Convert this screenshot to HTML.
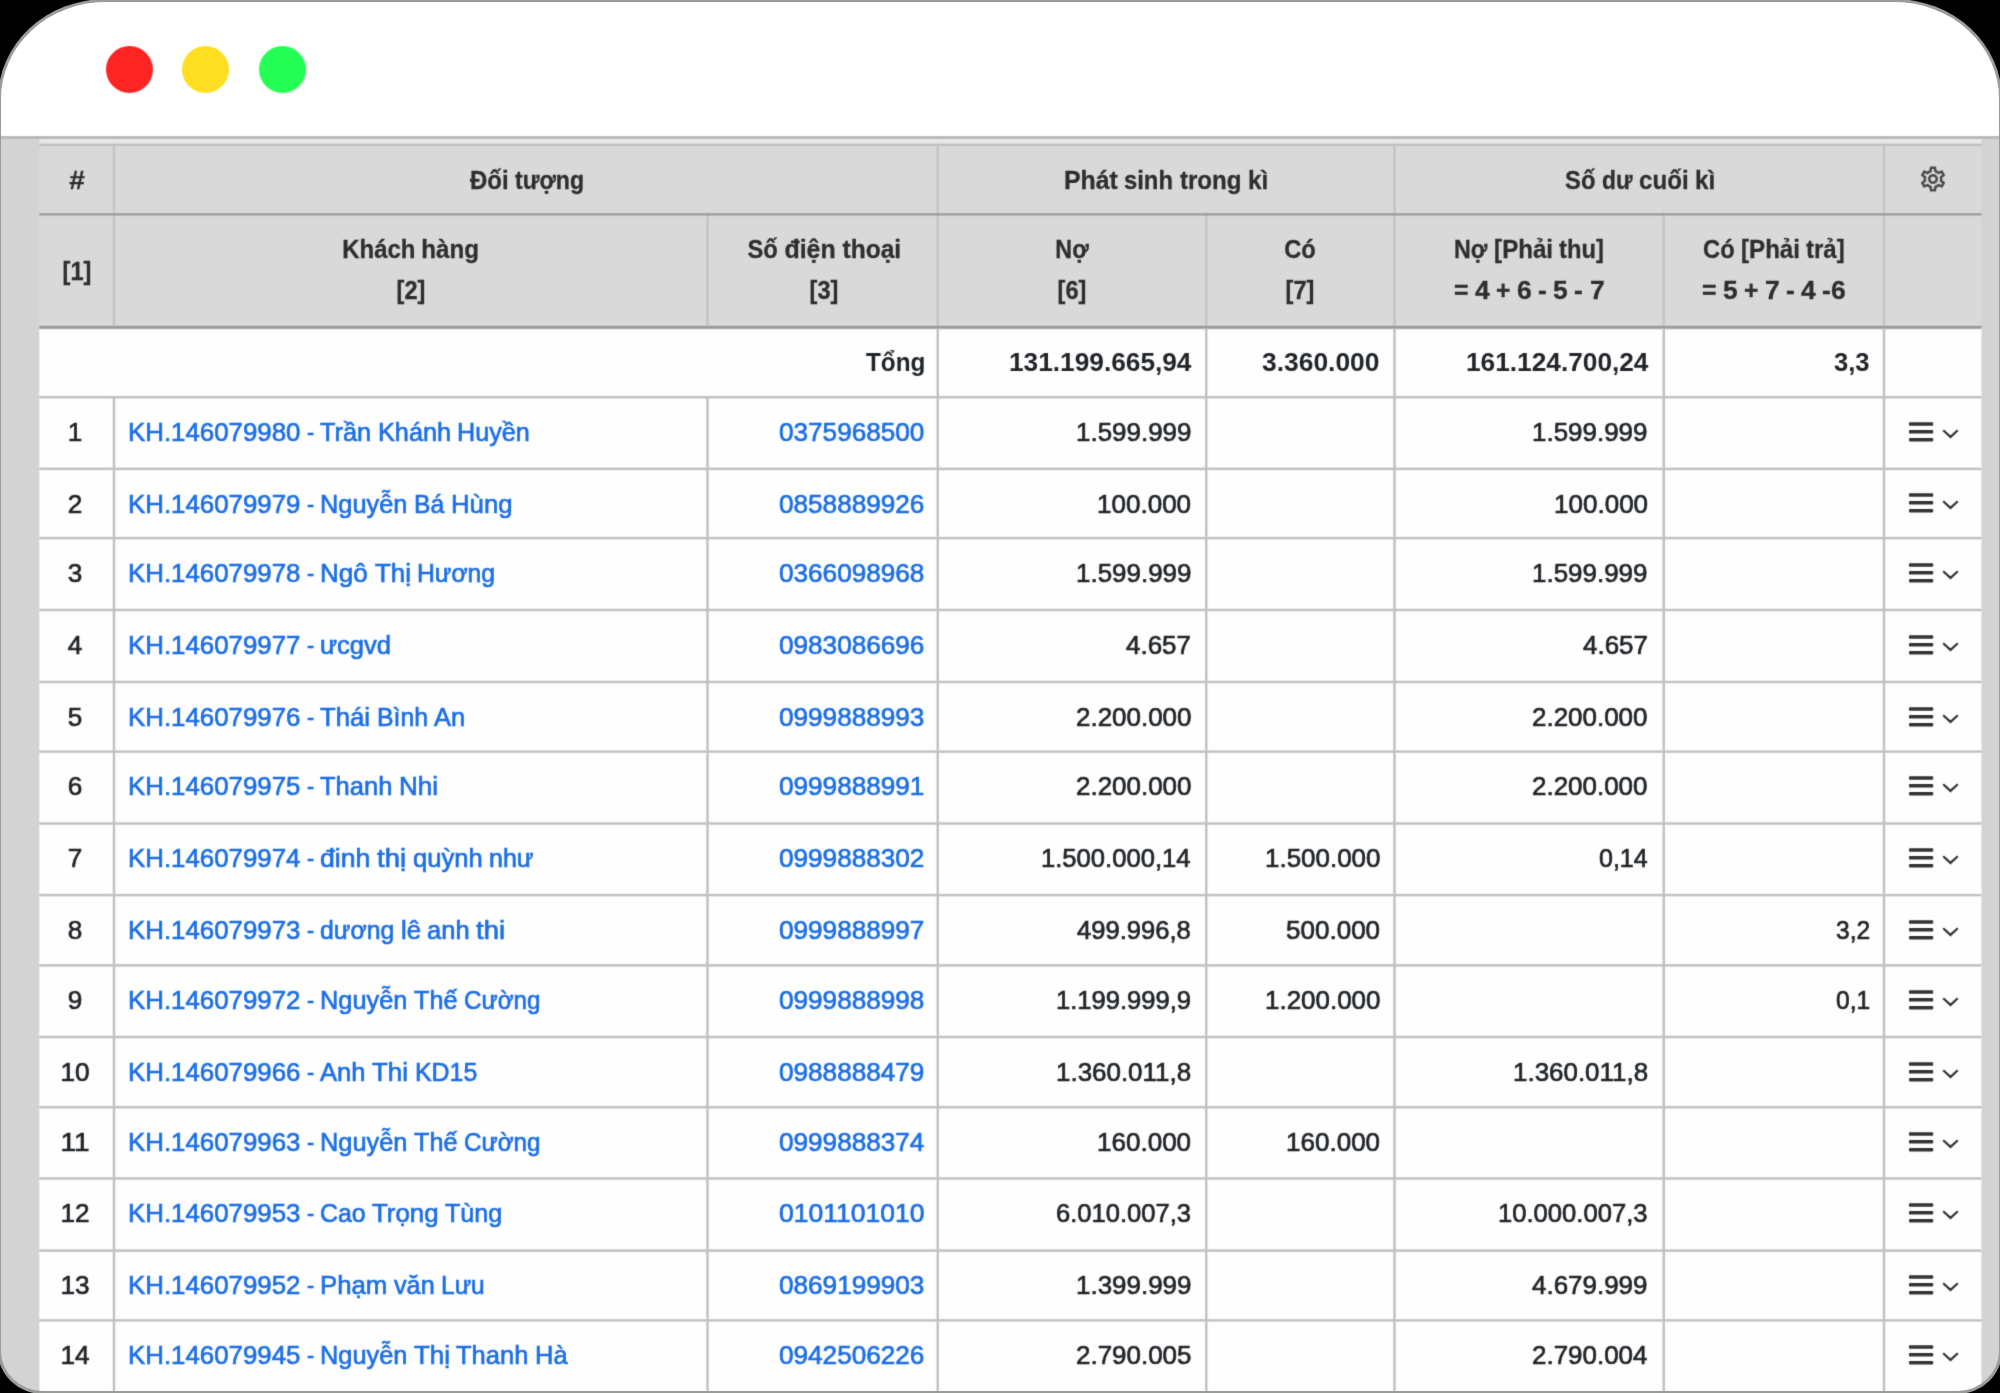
<!DOCTYPE html>
<html><head><meta charset="utf-8"><title>Công nợ khách hàng</title>
<style>
html,body{margin:0;padding:0;background:#000;}
html{overflow:hidden;width:2000px;height:1393px;}
body{width:2000px;height:1393px;overflow:hidden;position:relative;font-family:"Liberation Sans", sans-serif;}
#clip{position:absolute;left:0;top:0;width:2000px;height:1393px;overflow:hidden;}
#win{position:absolute;left:-2px;top:-1px;width:2004px;height:1395px;box-sizing:border-box;border:3px solid #9a9c9a;border-radius:108px 108px 45px 45px / 100px 100px 43px 43px;background:#d3d3d3;overflow:hidden;}
#inner{position:absolute;left:-1px;top:-2px;width:2000px;height:1393px;filter:url(#soft);}
#bar{position:absolute;left:0;top:0;width:2000px;height:136px;background:#fff;}
#barline{position:absolute;left:0;top:136px;width:2000px;height:3px;background:#b9bbb8;}
.dot{position:absolute;top:46px;width:47px;height:47px;border-radius:50%;}
i{position:absolute;display:block;}
.t{position:absolute;white-space:nowrap;font-size:25.3px;line-height:0;height:0;display:block;}
.t::before{content:"";display:inline-block;height:0;}
.h{font-weight:bold;color:#2e2e2e;-webkit-text-stroke:0.3px #2e2e2e;}
.b{font-weight:bold;color:#212529;}
.d{color:#212529;-webkit-text-stroke:0.65px #212529;}
.a{color:#1c6fe6;-webkit-text-stroke:0.65px #1c6fe6;}
.ic{position:absolute;display:block;}
u{display:inline-block;text-decoration:none;white-space:nowrap;}
s{display:inline-block;text-decoration:none;transform-origin:0 50%;white-space:nowrap;}
</style></head><body>
<svg width="0" height="0" style="position:absolute"><defs><filter id="soft" x="0" y="0" width="100%" height="100%" color-interpolation-filters="sRGB"><feConvolveMatrix order="3" kernelMatrix="0 1 0 1 4 1 0 1 0" divisor="8" edgeMode="duplicate" preserveAlpha="false"/></filter></defs></svg>
<div id="clip"><div id="win"><div id="inner">
<div id="bar"></div><div id="barline"></div>
<div class="dot" style="left:106px;background:#ff2424"></div>
<div class="dot" style="left:182px;background:#ffde21"></div>
<div class="dot" style="left:259px;background:#24ff55"></div>
<svg id="lines" width="2000" height="1393" viewBox="0 0 2000 1393"><defs><linearGradient id="g2" x1="0" y1="0" x2="0" y2="1"><stop offset="0" stop-color="#c8c8c8"/><stop offset="0.16" stop-color="#9a9a9a"/><stop offset="0.52" stop-color="#9a9a9a"/><stop offset="0.76" stop-color="#e4e4e4"/><stop offset="1" stop-color="#fefefe"/></linearGradient></defs>
<rect x="39.3" y="139" width="1942.2" height="4.8" fill="#e7e7e7"/>
<rect x="39.3" y="143.8" width="1942.2" height="181.2" fill="#d9d9d9"/>
<rect x="39.3" y="328" width="1942.2" height="1065" fill="#fefefe"/>
<rect x="39.3" y="325.5" width="1942.2" height="5" fill="url(#g2)"/>
<rect x="112.75" y="143.8" width="2.5" height="181.7" fill="#c4c4c4"/>
<rect x="706.25" y="212.5" width="2.5" height="113.0" fill="#c4c4c4"/>
<rect x="936.5" y="143.8" width="2.5" height="181.7" fill="#c4c4c4"/>
<rect x="1205.0" y="212.5" width="2.5" height="113.0" fill="#c4c4c4"/>
<rect x="1393.25" y="143.8" width="2.5" height="181.7" fill="#c4c4c4"/>
<rect x="1662.5" y="212.5" width="2.5" height="113.0" fill="#c4c4c4"/>
<rect x="1882.75" y="143.8" width="2.5" height="181.7" fill="#c4c4c4"/>
<rect x="112.75" y="397.3" width="2.5" height="995.7" fill="#c2c2c2"/>
<rect x="706.25" y="397.3" width="2.5" height="995.7" fill="#c2c2c2"/>
<rect x="936.5" y="328.4" width="2.5" height="1064.6" fill="#c2c2c2"/>
<rect x="1205.0" y="328.4" width="2.5" height="1064.6" fill="#c2c2c2"/>
<rect x="1393.25" y="328.4" width="2.5" height="1064.6" fill="#c2c2c2"/>
<rect x="1662.5" y="328.4" width="2.5" height="1064.6" fill="#c2c2c2"/>
<rect x="1882.75" y="328.4" width="2.5" height="1064.6" fill="#c2c2c2"/>
<rect x="39.3" y="395.95" width="1942.2" height="2.5" fill="#c2c2c2"/>
<rect x="39.3" y="467.65" width="1942.2" height="2.5" fill="#c2c2c2"/>
<rect x="39.3" y="536.85" width="1942.2" height="2.5" fill="#c2c2c2"/>
<rect x="39.3" y="608.75" width="1942.2" height="2.5" fill="#c2c2c2"/>
<rect x="39.3" y="680.75" width="1942.2" height="2.5" fill="#c2c2c2"/>
<rect x="39.3" y="750.35" width="1942.2" height="2.5" fill="#c2c2c2"/>
<rect x="39.3" y="822.25" width="1942.2" height="2.5" fill="#c2c2c2"/>
<rect x="39.3" y="893.85" width="1942.2" height="2.5" fill="#c2c2c2"/>
<rect x="39.3" y="964.15" width="1942.2" height="2.5" fill="#c2c2c2"/>
<rect x="39.3" y="1035.75" width="1942.2" height="2.5" fill="#c2c2c2"/>
<rect x="39.3" y="1105.95" width="1942.2" height="2.5" fill="#c2c2c2"/>
<rect x="39.3" y="1177.25" width="1942.2" height="2.5" fill="#c2c2c2"/>
<rect x="39.3" y="1249.35" width="1942.2" height="2.5" fill="#c2c2c2"/>
<rect x="39.3" y="1319.15" width="1942.2" height="2.5" fill="#c2c2c2"/>
<rect x="39.3" y="143.8" width="1942.2" height="2.2" fill="#c0c0c0"/>
<rect x="39.3" y="213.2" width="1942.2" height="2.3" fill="#9c9c9c"/>
</svg>
<div id="txt">
<span class="t h" style="left:76.65px;top:179.53px;transform:translateX(-50%);"><u style="width:15.61px"><s style="transform:scaleX(1.1087)">#</s></u></span>
<span class="t h" style="left:527.475px;top:179.53px;transform:translateX(-50%);"><u style="width:38.56px;margin-right:6.41px"><s style="transform:scaleX(0.9463)">Đối</s></u><u style="width:69.00px"><s style="transform:scaleX(0.9122)">tượng</s></u></span>
<span class="t h" style="left:1166.125px;top:179.53px;transform:translateX(-50%);"><u style="width:53.90px;margin-right:6.41px"><s style="transform:scaleX(0.9830)">Phát</s></u><u style="width:49.09px;margin-right:6.41px"><s style="transform:scaleX(0.9437)">sinh</s></u><u style="width:61.69px;margin-right:6.41px"><s style="transform:scaleX(0.9544)">trong</s></u><u style="width:20.27px"><s style="transform:scaleX(0.9602)">kì</s></u></span>
<span class="t h" style="left:1639.95px;top:179.53px;transform:translateX(-50%);"><u style="width:30.36px;margin-right:6.41px"><s style="transform:scaleX(0.9391)">Số</s></u><u style="width:30.44px;margin-right:6.41px"><s style="transform:scaleX(0.9011)">dư</s></u><u style="width:49.58px;margin-right:6.41px"><s style="transform:scaleX(0.9531)">cuối</s></u><u style="width:20.27px"><s style="transform:scaleX(0.9602)">kì</s></u></span>
<span class="t h" style="left:76.65px;top:270.73px;transform:translateX(-50%);"><u style="width:28.77px"><s style="transform:scaleX(0.9305)">[1]</s></u></span>
<span class="t h" style="left:410.75px;top:249.23px;transform:translateX(-50%);"><u style="width:73.14px;margin-right:6.41px"><s style="transform:scaleX(0.9461)">Khách</s></u><u style="width:57.87px"><s style="transform:scaleX(0.9575)">hàng</s></u></span>
<span class="t h" style="left:410.75px;top:289.83px;transform:translateX(-50%);"><u style="width:28.77px"><s style="transform:scaleX(0.9305)">[2]</s></u></span>
<span class="t h" style="left:824.225px;top:249.23px;transform:translateX(-50%);"><u style="width:30.36px;margin-right:6.41px"><s style="transform:scaleX(0.9391)">Số</s></u><u style="width:51.19px;margin-right:6.41px"><s style="transform:scaleX(0.9840)">điện</s></u><u style="width:58.68px"><s style="transform:scaleX(0.9709)">thoại</s></u></span>
<span class="t h" style="left:823.925px;top:289.83px;transform:translateX(-50%);"><u style="width:28.77px"><s style="transform:scaleX(0.9305)">[3]</s></u></span>
<span class="t h" style="left:1072.0px;top:249.23px;transform:translateX(-50%);"><u style="width:33.28px"><s style="transform:scaleX(0.9176)">Nợ</s></u></span>
<span class="t h" style="left:1072.0px;top:289.83px;transform:translateX(-50%);"><u style="width:28.77px"><s style="transform:scaleX(0.9305)">[6]</s></u></span>
<span class="t h" style="left:1300.375px;top:249.23px;transform:translateX(-50%);"><u style="width:31.58px"><s style="transform:scaleX(0.9363)">Có</s></u></span>
<span class="t h" style="left:1300.375px;top:289.83px;transform:translateX(-50%);"><u style="width:28.77px"><s style="transform:scaleX(0.9305)">[7]</s></u></span>
<span class="t h" style="left:1529.125px;top:249.23px;transform:translateX(-50%);"><u style="width:33.28px;margin-right:6.41px"><s style="transform:scaleX(0.9176)">Nợ</s></u><u style="width:58.94px;margin-right:6.41px"><s style="transform:scaleX(0.9528)">[Phải</s></u><u style="width:44.78px"><s style="transform:scaleX(0.9374)">thu]</s></u></span>
<span class="t h" style="left:1529.125px;top:289.83px;transform:translateX(-50%);"><u style="width:14.56px;margin-right:6.41px"><s style="transform:scaleX(0.9851)">=</s></u><u style="width:14.72px;margin-right:6.41px"><s style="transform:scaleX(1.0455)">4</s></u><u style="width:14.38px;margin-right:6.41px"><s style="transform:scaleX(0.9729)">+</s></u><u style="width:14.72px;margin-right:6.41px"><s style="transform:scaleX(1.0455)">6</s></u><u style="width:8.80px;margin-right:6.41px"><s style="transform:scaleX(1.0427)">-</s></u><u style="width:14.72px;margin-right:6.41px"><s style="transform:scaleX(1.0455)">5</s></u><u style="width:8.80px;margin-right:6.41px"><s style="transform:scaleX(1.0427)">-</s></u><u style="width:14.72px"><s style="transform:scaleX(1.0455)">7</s></u></span>
<span class="t h" style="left:1773.875px;top:249.23px;transform:translateX(-50%);"><u style="width:31.58px;margin-right:6.41px"><s style="transform:scaleX(0.9363)">Có</s></u><u style="width:58.94px;margin-right:6.41px"><s style="transform:scaleX(0.9528)">[Phải</s></u><u style="width:38.59px"><s style="transform:scaleX(0.9465)">trả]</s></u></span>
<span class="t h" style="left:1773.875px;top:289.83px;transform:translateX(-50%);"><u style="width:14.56px;margin-right:6.41px"><s style="transform:scaleX(0.9851)">=</s></u><u style="width:14.72px;margin-right:6.41px"><s style="transform:scaleX(1.0455)">5</s></u><u style="width:14.38px;margin-right:6.41px"><s style="transform:scaleX(0.9729)">+</s></u><u style="width:14.72px;margin-right:6.41px"><s style="transform:scaleX(1.0455)">7</s></u><u style="width:8.80px;margin-right:6.41px"><s style="transform:scaleX(1.0427)">-</s></u><u style="width:14.72px;margin-right:6.41px"><s style="transform:scaleX(1.0455)">4</s></u><u style="width:23.50px"><s style="transform:scaleX(1.0444)">-6</s></u></span>
<span class="t b" style="right:1074.5px;top:362.23px;"><u style="width:59.48px"><s style="transform:scaleX(0.9623)">Tổng</s></u></span>
<span class="t b" style="right:808.5999999999999px;top:362.23px;"><u style="width:182.47px"><s style="transform:scaleX(1.0377)">131.199.665,94</s></u></span>
<span class="t b" style="right:620.8px;top:362.23px;"><u style="width:117.51px"><s style="transform:scaleX(1.0441)">3.360.000</s></u></span>
<span class="t b" style="right:351.79999999999995px;top:362.23px;"><u style="width:182.47px"><s style="transform:scaleX(1.0377)">161.124.700,24</s></u></span>
<span class="t b" style="right:130.4000000000001px;top:362.23px;"><u style="width:35.63px"><s style="transform:scaleX(1.0131)">3,3</s></u></span>
<span class="t d" style="left:75.15px;top:432.03px;transform:translateX(-50%);"><u style="width:14.55px"><s style="transform:scaleX(1.0334)">1</s></u></span>
<span class="t a" style="left:128px;top:432.03px;"><u style="width:172.41px;margin-right:6.41px"><s style="transform:scaleX(1.0214)">KH.146079980</s></u><u style="width:7.16px;margin-right:6.41px"><s style="transform:scaleX(0.8483)">-</s></u><u style="width:51.12px;margin-right:6.41px"><s style="transform:scaleX(1.0008)">Trần</s></u><u style="width:73.11px;margin-right:6.41px"><s style="transform:scaleX(0.9993)">Khánh</s></u><u style="width:72.81px"><s style="transform:scaleX(0.9958)">Huyền</s></u></span>
<span class="t a" style="right:1075.6px;top:432.03px;"><u style="width:145.42px"><s style="transform:scaleX(1.0335)">0375968500</s></u></span>
<span class="t d" style="right:809px;top:432.03px;"><u style="width:115.45px"><s style="transform:scaleX(1.0258)">1.599.999</s></u></span>
<span class="t d" style="right:352.20000000000005px;top:432.03px;"><u style="width:115.45px"><s style="transform:scaleX(1.0258)">1.599.999</s></u></span>
<svg class="ic" style="left:1906px;top:417.7px" width="60" height="28" viewBox="0 0 60 28"><g fill="#333"><rect x="3" y="4.3" width="24.2" height="3.5" rx="0.8"/><rect x="3" y="12.1" width="24.2" height="3.5" rx="0.8"/><rect x="3" y="19.9" width="24.2" height="3.5" rx="0.8"/></g><path d="M37.2 12.3 L44.5 18.9 L51.8 12.3" fill="none" stroke="#333" stroke-width="2.2"/></svg>
<span class="t d" style="left:75.15px;top:503.73px;transform:translateX(-50%);"><u style="width:14.55px"><s style="transform:scaleX(1.0334)">2</s></u></span>
<span class="t a" style="left:128px;top:503.73px;"><u style="width:172.41px;margin-right:6.41px"><s style="transform:scaleX(1.0214)">KH.146079979</s></u><u style="width:7.16px;margin-right:6.41px"><s style="transform:scaleX(0.8483)">-</s></u><u style="width:87.34px;margin-right:6.41px"><s style="transform:scaleX(1.0016)">Nguyễn</s></u><u style="width:30.20px;margin-right:6.41px"><s style="transform:scaleX(0.9758)">Bá</s></u><u style="width:61.55px"><s style="transform:scaleX(1.0177)">Hùng</s></u></span>
<span class="t a" style="right:1075.6px;top:503.73px;"><u style="width:145.42px"><s style="transform:scaleX(1.0335)">0858889926</s></u></span>
<span class="t d" style="right:809px;top:503.73px;"><u style="width:94.08px"><s style="transform:scaleX(1.0288)">100.000</s></u></span>
<span class="t d" style="right:352.20000000000005px;top:503.73px;"><u style="width:94.08px"><s style="transform:scaleX(1.0288)">100.000</s></u></span>
<svg class="ic" style="left:1906px;top:489.4px" width="60" height="28" viewBox="0 0 60 28"><g fill="#333"><rect x="3" y="4.3" width="24.2" height="3.5" rx="0.8"/><rect x="3" y="12.1" width="24.2" height="3.5" rx="0.8"/><rect x="3" y="19.9" width="24.2" height="3.5" rx="0.8"/></g><path d="M37.2 12.3 L44.5 18.9 L51.8 12.3" fill="none" stroke="#333" stroke-width="2.2"/></svg>
<span class="t d" style="left:75.15px;top:572.93px;transform:translateX(-50%);"><u style="width:14.55px"><s style="transform:scaleX(1.0334)">3</s></u></span>
<span class="t a" style="left:128px;top:572.93px;"><u style="width:172.41px;margin-right:6.41px"><s style="transform:scaleX(1.0214)">KH.146079978</s></u><u style="width:7.16px;margin-right:6.41px"><s style="transform:scaleX(0.8483)">-</s></u><u style="width:47.75px;margin-right:6.41px"><s style="transform:scaleX(1.0287)">Ngô</s></u><u style="width:35.98px;margin-right:6.41px"><s style="transform:scaleX(1.0233)">Thị</s></u><u style="width:78.09px"><s style="transform:scaleX(0.9769)">Hương</s></u></span>
<span class="t a" style="right:1075.6px;top:572.93px;"><u style="width:145.42px"><s style="transform:scaleX(1.0335)">0366098968</s></u></span>
<span class="t d" style="right:809px;top:572.93px;"><u style="width:115.45px"><s style="transform:scaleX(1.0258)">1.599.999</s></u></span>
<span class="t d" style="right:352.20000000000005px;top:572.93px;"><u style="width:115.45px"><s style="transform:scaleX(1.0258)">1.599.999</s></u></span>
<svg class="ic" style="left:1906px;top:558.6px" width="60" height="28" viewBox="0 0 60 28"><g fill="#333"><rect x="3" y="4.3" width="24.2" height="3.5" rx="0.8"/><rect x="3" y="12.1" width="24.2" height="3.5" rx="0.8"/><rect x="3" y="19.9" width="24.2" height="3.5" rx="0.8"/></g><path d="M37.2 12.3 L44.5 18.9 L51.8 12.3" fill="none" stroke="#333" stroke-width="2.2"/></svg>
<span class="t d" style="left:75.15px;top:644.83px;transform:translateX(-50%);"><u style="width:14.55px"><s style="transform:scaleX(1.0334)">4</s></u></span>
<span class="t a" style="left:128px;top:644.83px;"><u style="width:172.41px;margin-right:6.41px"><s style="transform:scaleX(1.0214)">KH.146079977</s></u><u style="width:7.16px;margin-right:6.41px"><s style="transform:scaleX(0.8483)">-</s></u><u style="width:71.05px"><s style="transform:scaleX(1.0095)">ưcgvd</s></u></span>
<span class="t a" style="right:1075.6px;top:644.83px;"><u style="width:145.42px"><s style="transform:scaleX(1.0335)">0983086696</s></u></span>
<span class="t d" style="right:809px;top:644.83px;"><u style="width:65.00px"><s style="transform:scaleX(1.0267)">4.657</s></u></span>
<span class="t d" style="right:352.20000000000005px;top:644.83px;"><u style="width:65.00px"><s style="transform:scaleX(1.0267)">4.657</s></u></span>
<svg class="ic" style="left:1906px;top:630.5px" width="60" height="28" viewBox="0 0 60 28"><g fill="#333"><rect x="3" y="4.3" width="24.2" height="3.5" rx="0.8"/><rect x="3" y="12.1" width="24.2" height="3.5" rx="0.8"/><rect x="3" y="19.9" width="24.2" height="3.5" rx="0.8"/></g><path d="M37.2 12.3 L44.5 18.9 L51.8 12.3" fill="none" stroke="#333" stroke-width="2.2"/></svg>
<span class="t d" style="left:75.15px;top:716.83px;transform:translateX(-50%);"><u style="width:14.55px"><s style="transform:scaleX(1.0334)">5</s></u></span>
<span class="t a" style="left:128px;top:716.83px;"><u style="width:172.41px;margin-right:6.41px"><s style="transform:scaleX(1.0214)">KH.146079976</s></u><u style="width:7.16px;margin-right:6.41px"><s style="transform:scaleX(0.8483)">-</s></u><u style="width:50.06px;margin-right:6.41px"><s style="transform:scaleX(1.0171)">Thái</s></u><u style="width:51.08px;margin-right:6.41px"><s style="transform:scaleX(0.9814)">Bình</s></u><u style="width:31.17px"><s style="transform:scaleX(1.0071)">An</s></u></span>
<span class="t a" style="right:1075.6px;top:716.83px;"><u style="width:145.42px"><s style="transform:scaleX(1.0335)">0999888993</s></u></span>
<span class="t d" style="right:809px;top:716.83px;"><u style="width:115.45px"><s style="transform:scaleX(1.0258)">2.200.000</s></u></span>
<span class="t d" style="right:352.20000000000005px;top:716.83px;"><u style="width:115.45px"><s style="transform:scaleX(1.0258)">2.200.000</s></u></span>
<svg class="ic" style="left:1906px;top:702.5px" width="60" height="28" viewBox="0 0 60 28"><g fill="#333"><rect x="3" y="4.3" width="24.2" height="3.5" rx="0.8"/><rect x="3" y="12.1" width="24.2" height="3.5" rx="0.8"/><rect x="3" y="19.9" width="24.2" height="3.5" rx="0.8"/></g><path d="M37.2 12.3 L44.5 18.9 L51.8 12.3" fill="none" stroke="#333" stroke-width="2.2"/></svg>
<span class="t d" style="left:75.15px;top:786.43px;transform:translateX(-50%);"><u style="width:14.55px"><s style="transform:scaleX(1.0334)">6</s></u></span>
<span class="t a" style="left:128px;top:786.43px;"><u style="width:172.41px;margin-right:6.41px"><s style="transform:scaleX(1.0214)">KH.146079975</s></u><u style="width:7.16px;margin-right:6.41px"><s style="transform:scaleX(0.8483)">-</s></u><u style="width:72.31px;margin-right:6.41px"><s style="transform:scaleX(1.0081)">Thanh</s></u><u style="width:39.02px"><s style="transform:scaleX(1.0277)">Nhi</s></u></span>
<span class="t a" style="right:1075.6px;top:786.43px;"><u style="width:145.42px"><s style="transform:scaleX(1.0335)">0999888991</s></u></span>
<span class="t d" style="right:809px;top:786.43px;"><u style="width:115.45px"><s style="transform:scaleX(1.0258)">2.200.000</s></u></span>
<span class="t d" style="right:352.20000000000005px;top:786.43px;"><u style="width:115.45px"><s style="transform:scaleX(1.0258)">2.200.000</s></u></span>
<svg class="ic" style="left:1906px;top:772.1px" width="60" height="28" viewBox="0 0 60 28"><g fill="#333"><rect x="3" y="4.3" width="24.2" height="3.5" rx="0.8"/><rect x="3" y="12.1" width="24.2" height="3.5" rx="0.8"/><rect x="3" y="19.9" width="24.2" height="3.5" rx="0.8"/></g><path d="M37.2 12.3 L44.5 18.9 L51.8 12.3" fill="none" stroke="#333" stroke-width="2.2"/></svg>
<span class="t d" style="left:75.15px;top:858.33px;transform:translateX(-50%);"><u style="width:14.55px"><s style="transform:scaleX(1.0334)">7</s></u></span>
<span class="t a" style="left:128px;top:858.33px;"><u style="width:172.41px;margin-right:6.41px"><s style="transform:scaleX(1.0214)">KH.146079974</s></u><u style="width:7.16px;margin-right:6.41px"><s style="transform:scaleX(0.8483)">-</s></u><u style="width:50.31px;margin-right:6.41px"><s style="transform:scaleX(1.0519)">đinh</s></u><u style="width:29.02px;margin-right:6.41px"><s style="transform:scaleX(1.0861)">thị</s></u><u style="width:69.77px;margin-right:6.41px"><s style="transform:scaleX(1.0120)">quỳnh</s></u><u style="width:44.56px"><s style="transform:scaleX(0.9885)">như</s></u></span>
<span class="t a" style="right:1075.6px;top:858.33px;"><u style="width:145.42px"><s style="transform:scaleX(1.0335)">0999888302</s></u></span>
<span class="t d" style="right:809px;top:858.33px;"><u style="width:149.62px"><s style="transform:scaleX(1.0129)">1.500.000,14</s></u></span>
<span class="t d" style="right:620px;top:858.33px;"><u style="width:115.45px"><s style="transform:scaleX(1.0258)">1.500.000</s></u></span>
<span class="t d" style="right:352.20000000000005px;top:858.33px;"><u style="width:48.72px"><s style="transform:scaleX(0.9892)">0,14</s></u></span>
<svg class="ic" style="left:1906px;top:844.0px" width="60" height="28" viewBox="0 0 60 28"><g fill="#333"><rect x="3" y="4.3" width="24.2" height="3.5" rx="0.8"/><rect x="3" y="12.1" width="24.2" height="3.5" rx="0.8"/><rect x="3" y="19.9" width="24.2" height="3.5" rx="0.8"/></g><path d="M37.2 12.3 L44.5 18.9 L51.8 12.3" fill="none" stroke="#333" stroke-width="2.2"/></svg>
<span class="t d" style="left:75.15px;top:929.93px;transform:translateX(-50%);"><u style="width:14.55px"><s style="transform:scaleX(1.0334)">8</s></u></span>
<span class="t a" style="left:128px;top:929.93px;"><u style="width:172.41px;margin-right:6.41px"><s style="transform:scaleX(1.0214)">KH.146079973</s></u><u style="width:7.16px;margin-right:6.41px"><s style="transform:scaleX(0.8483)">-</s></u><u style="width:74.22px;margin-right:6.41px"><s style="transform:scaleX(0.9801)">dương</s></u><u style="width:20.02px;margin-right:6.41px"><s style="transform:scaleX(1.0162)">lê</s></u><u style="width:42.62px;margin-right:6.41px"><s style="transform:scaleX(1.0095)">anh</s></u><u style="width:29.02px"><s style="transform:scaleX(1.0861)">thi</s></u></span>
<span class="t a" style="right:1075.6px;top:929.93px;"><u style="width:145.42px"><s style="transform:scaleX(1.0335)">0999888997</s></u></span>
<span class="t d" style="right:809px;top:929.93px;"><u style="width:113.72px"><s style="transform:scaleX(1.0104)">499.996,8</s></u></span>
<span class="t d" style="right:620px;top:929.93px;"><u style="width:94.08px"><s style="transform:scaleX(1.0288)">500.000</s></u></span>
<span class="t d" style="right:130px;top:929.93px;"><u style="width:34.19px"><s style="transform:scaleX(0.9721)">3,2</s></u></span>
<svg class="ic" style="left:1906px;top:915.6px" width="60" height="28" viewBox="0 0 60 28"><g fill="#333"><rect x="3" y="4.3" width="24.2" height="3.5" rx="0.8"/><rect x="3" y="12.1" width="24.2" height="3.5" rx="0.8"/><rect x="3" y="19.9" width="24.2" height="3.5" rx="0.8"/></g><path d="M37.2 12.3 L44.5 18.9 L51.8 12.3" fill="none" stroke="#333" stroke-width="2.2"/></svg>
<span class="t d" style="left:75.15px;top:1000.23px;transform:translateX(-50%);"><u style="width:14.55px"><s style="transform:scaleX(1.0334)">9</s></u></span>
<span class="t a" style="left:128px;top:1000.23px;"><u style="width:172.41px;margin-right:6.41px"><s style="transform:scaleX(1.0214)">KH.146079972</s></u><u style="width:7.16px;margin-right:6.41px"><s style="transform:scaleX(0.8483)">-</s></u><u style="width:87.34px;margin-right:6.41px"><s style="transform:scaleX(1.0016)">Nguyễn</s></u><u style="width:43.42px;margin-right:6.41px"><s style="transform:scaleX(0.9961)">Thế</s></u><u style="width:76.47px"><s style="transform:scaleX(0.9566)">Cường</s></u></span>
<span class="t a" style="right:1075.6px;top:1000.23px;"><u style="width:145.42px"><s style="transform:scaleX(1.0335)">0999888998</s></u></span>
<span class="t d" style="right:809px;top:1000.23px;"><u style="width:135.08px"><s style="transform:scaleX(1.0108)">1.199.999,9</s></u></span>
<span class="t d" style="right:620px;top:1000.23px;"><u style="width:115.45px"><s style="transform:scaleX(1.0258)">1.200.000</s></u></span>
<span class="t d" style="right:130px;top:1000.23px;"><u style="width:34.19px"><s style="transform:scaleX(0.9721)">0,1</s></u></span>
<svg class="ic" style="left:1906px;top:985.9px" width="60" height="28" viewBox="0 0 60 28"><g fill="#333"><rect x="3" y="4.3" width="24.2" height="3.5" rx="0.8"/><rect x="3" y="12.1" width="24.2" height="3.5" rx="0.8"/><rect x="3" y="19.9" width="24.2" height="3.5" rx="0.8"/></g><path d="M37.2 12.3 L44.5 18.9 L51.8 12.3" fill="none" stroke="#333" stroke-width="2.2"/></svg>
<span class="t d" style="left:75.15px;top:1071.83px;transform:translateX(-50%);"><u style="width:29.09px"><s style="transform:scaleX(1.0338)">10</s></u></span>
<span class="t a" style="left:128px;top:1071.83px;"><u style="width:172.41px;margin-right:6.41px"><s style="transform:scaleX(1.0214)">KH.146079966</s></u><u style="width:7.16px;margin-right:6.41px"><s style="transform:scaleX(0.8483)">-</s></u><u style="width:45.42px;margin-right:6.41px"><s style="transform:scaleX(1.0089)">Anh</s></u><u style="width:35.98px;margin-right:6.41px"><s style="transform:scaleX(1.0233)">Thi</s></u><u style="width:62.31px"><s style="transform:scaleX(0.9847)">KD15</s></u></span>
<span class="t a" style="right:1075.6px;top:1071.83px;"><u style="width:145.42px"><s style="transform:scaleX(1.0335)">0988888479</s></u></span>
<span class="t d" style="right:809px;top:1071.83px;"><u style="width:135.08px"><s style="transform:scaleX(1.0251)">1.360.011,8</s></u></span>
<span class="t d" style="right:352.20000000000005px;top:1071.83px;"><u style="width:135.08px"><s style="transform:scaleX(1.0251)">1.360.011,8</s></u></span>
<svg class="ic" style="left:1906px;top:1057.5px" width="60" height="28" viewBox="0 0 60 28"><g fill="#333"><rect x="3" y="4.3" width="24.2" height="3.5" rx="0.8"/><rect x="3" y="12.1" width="24.2" height="3.5" rx="0.8"/><rect x="3" y="19.9" width="24.2" height="3.5" rx="0.8"/></g><path d="M37.2 12.3 L44.5 18.9 L51.8 12.3" fill="none" stroke="#333" stroke-width="2.2"/></svg>
<span class="t d" style="left:75.15px;top:1142.03px;transform:translateX(-50%);"><u style="width:29.09px"><s style="transform:scaleX(1.1073)">11</s></u></span>
<span class="t a" style="left:128px;top:1142.03px;"><u style="width:172.41px;margin-right:6.41px"><s style="transform:scaleX(1.0214)">KH.146079963</s></u><u style="width:7.16px;margin-right:6.41px"><s style="transform:scaleX(0.8483)">-</s></u><u style="width:87.34px;margin-right:6.41px"><s style="transform:scaleX(1.0016)">Nguyễn</s></u><u style="width:43.42px;margin-right:6.41px"><s style="transform:scaleX(0.9961)">Thế</s></u><u style="width:76.47px"><s style="transform:scaleX(0.9566)">Cường</s></u></span>
<span class="t a" style="right:1075.6px;top:1142.03px;"><u style="width:145.42px"><s style="transform:scaleX(1.0335)">0999888374</s></u></span>
<span class="t d" style="right:809px;top:1142.03px;"><u style="width:94.08px"><s style="transform:scaleX(1.0288)">160.000</s></u></span>
<span class="t d" style="right:620px;top:1142.03px;"><u style="width:94.08px"><s style="transform:scaleX(1.0288)">160.000</s></u></span>
<svg class="ic" style="left:1906px;top:1127.7px" width="60" height="28" viewBox="0 0 60 28"><g fill="#333"><rect x="3" y="4.3" width="24.2" height="3.5" rx="0.8"/><rect x="3" y="12.1" width="24.2" height="3.5" rx="0.8"/><rect x="3" y="19.9" width="24.2" height="3.5" rx="0.8"/></g><path d="M37.2 12.3 L44.5 18.9 L51.8 12.3" fill="none" stroke="#333" stroke-width="2.2"/></svg>
<span class="t d" style="left:75.15px;top:1213.33px;transform:translateX(-50%);"><u style="width:29.09px"><s style="transform:scaleX(1.0338)">12</s></u></span>
<span class="t a" style="left:128px;top:1213.33px;"><u style="width:172.41px;margin-right:6.41px"><s style="transform:scaleX(1.0214)">KH.146079953</s></u><u style="width:7.16px;margin-right:6.41px"><s style="transform:scaleX(0.8483)">-</s></u><u style="width:45.69px;margin-right:6.41px"><s style="transform:scaleX(0.9843)">Cao</s></u><u style="width:66.59px;margin-right:6.41px"><s style="transform:scaleX(1.0219)">Trọng</s></u><u style="width:57.33px"><s style="transform:scaleX(0.9941)">Tùng</s></u></span>
<span class="t a" style="right:1075.6px;top:1213.33px;"><u style="width:145.42px"><s style="transform:scaleX(1.0476)">0101101010</s></u></span>
<span class="t d" style="right:809px;top:1213.33px;"><u style="width:135.08px"><s style="transform:scaleX(1.0108)">6.010.007,3</s></u></span>
<span class="t d" style="right:352.20000000000005px;top:1213.33px;"><u style="width:149.62px"><s style="transform:scaleX(1.0129)">10.000.007,3</s></u></span>
<svg class="ic" style="left:1906px;top:1199.0px" width="60" height="28" viewBox="0 0 60 28"><g fill="#333"><rect x="3" y="4.3" width="24.2" height="3.5" rx="0.8"/><rect x="3" y="12.1" width="24.2" height="3.5" rx="0.8"/><rect x="3" y="19.9" width="24.2" height="3.5" rx="0.8"/></g><path d="M37.2 12.3 L44.5 18.9 L51.8 12.3" fill="none" stroke="#333" stroke-width="2.2"/></svg>
<span class="t d" style="left:75.15px;top:1285.43px;transform:translateX(-50%);"><u style="width:29.09px"><s style="transform:scaleX(1.0338)">13</s></u></span>
<span class="t a" style="left:128px;top:1285.43px;"><u style="width:172.41px;margin-right:6.41px"><s style="transform:scaleX(1.0214)">KH.146079952</s></u><u style="width:7.16px;margin-right:6.41px"><s style="transform:scaleX(0.8483)">-</s></u><u style="width:67.34px;margin-right:6.41px"><s style="transform:scaleX(1.0189)">Phạm</s></u><u style="width:40.72px;margin-right:6.41px"><s style="transform:scaleX(0.9980)">văn</s></u><u style="width:43.66px"><s style="transform:scaleX(0.9685)">Lưu</s></u></span>
<span class="t a" style="right:1075.6px;top:1285.43px;"><u style="width:145.42px"><s style="transform:scaleX(1.0335)">0869199903</s></u></span>
<span class="t d" style="right:809px;top:1285.43px;"><u style="width:115.45px"><s style="transform:scaleX(1.0258)">1.399.999</s></u></span>
<span class="t d" style="right:352.20000000000005px;top:1285.43px;"><u style="width:115.45px"><s style="transform:scaleX(1.0258)">4.679.999</s></u></span>
<svg class="ic" style="left:1906px;top:1271.1px" width="60" height="28" viewBox="0 0 60 28"><g fill="#333"><rect x="3" y="4.3" width="24.2" height="3.5" rx="0.8"/><rect x="3" y="12.1" width="24.2" height="3.5" rx="0.8"/><rect x="3" y="19.9" width="24.2" height="3.5" rx="0.8"/></g><path d="M37.2 12.3 L44.5 18.9 L51.8 12.3" fill="none" stroke="#333" stroke-width="2.2"/></svg>
<span class="t d" style="left:75.15px;top:1355.23px;transform:translateX(-50%);"><u style="width:29.09px"><s style="transform:scaleX(1.0338)">14</s></u></span>
<span class="t a" style="left:128px;top:1355.23px;"><u style="width:172.41px;margin-right:6.41px"><s style="transform:scaleX(1.0214)">KH.146079945</s></u><u style="width:7.16px;margin-right:6.41px"><s style="transform:scaleX(0.8483)">-</s></u><u style="width:87.34px;margin-right:6.41px"><s style="transform:scaleX(1.0016)">Nguyễn</s></u><u style="width:35.98px;margin-right:6.41px"><s style="transform:scaleX(1.0233)">Thị</s></u><u style="width:72.31px;margin-right:6.41px"><s style="transform:scaleX(1.0081)">Thanh</s></u><u style="width:32.55px"><s style="transform:scaleX(1.0065)">Hà</s></u></span>
<span class="t a" style="right:1075.6px;top:1355.23px;"><u style="width:145.42px"><s style="transform:scaleX(1.0335)">0942506226</s></u></span>
<span class="t d" style="right:809px;top:1355.23px;"><u style="width:115.45px"><s style="transform:scaleX(1.0258)">2.790.005</s></u></span>
<span class="t d" style="right:352.20000000000005px;top:1355.23px;"><u style="width:115.45px"><s style="transform:scaleX(1.0258)">2.790.004</s></u></span>
<svg class="ic" style="left:1906px;top:1340.9px" width="60" height="28" viewBox="0 0 60 28"><g fill="#333"><rect x="3" y="4.3" width="24.2" height="3.5" rx="0.8"/><rect x="3" y="12.1" width="24.2" height="3.5" rx="0.8"/><rect x="3" y="19.9" width="24.2" height="3.5" rx="0.8"/></g><path d="M37.2 12.3 L44.5 18.9 L51.8 12.3" fill="none" stroke="#333" stroke-width="2.2"/></svg>
<svg class="ic" style="left:1918.4px;top:163.9px" width="30" height="30" viewBox="0 0 24 24"><path fill="#4c4c4c" d="M19.43 12.98c.04-.32.07-.64.07-.98 0-.34-.03-.66-.07-.98l2.11-1.65c.19-.15.24-.42.12-.64l-2-3.46c-.09-.16-.26-.25-.44-.25-.06 0-.12.01-.17.03l-2.49 1c-.52-.4-1.08-.73-1.69-.98l-.38-2.65C14.46 2.18 14.25 2 14 2h-4c-.25 0-.46.18-.49.42l-.38 2.65c-.61.25-1.17.59-1.69.98l-2.49-1c-.06-.02-.12-.03-.18-.03-.17 0-.34.09-.43.25l-2 3.46c-.13.22-.07.49.12.64l2.11 1.65c-.04.32-.07.65-.07.98 0 .33.03.66.07.98l-2.11 1.65c-.19.15-.24.42-.12.64l2 3.46c.09.16.26.25.44.25.06 0 .12-.01.17-.03l2.49-1c.52.4 1.08.73 1.69.98l.38 2.65c.03.24.24.42.49.42h4c.25 0 .46-.18.49-.42l.38-2.65c.61-.25 1.17-.59 1.69-.98l2.49 1c.06.02.12.03.18.03.17 0 .34-.09.43-.25l2-3.46c.12-.22.07-.49-.12-.64l-2.11-1.65zm-1.98-1.71c.04.31.05.52.05.73 0 .21-.02.43-.05.73l-.14 1.13.89.7 1.08.84-.7 1.21-1.27-.51-1.04-.42-.9.68c-.43.32-.84.56-1.25.73l-1.06.43-.16 1.13-.2 1.35h-1.4l-.19-1.35-.16-1.13-1.06-.43c-.43-.18-.83-.41-1.23-.71l-.91-.7-1.06.43-1.27.51-.7-1.21 1.08-.84.89-.7-.14-1.13c-.03-.31-.05-.54-.05-.74s.02-.43.05-.73l.14-1.13-.89-.7-1.08-.84.7-1.21 1.27.51 1.04.42.9-.68c.43-.32.84-.56 1.25-.73l1.06-.43.16-1.13.2-1.35h1.39l.19 1.35.16 1.13 1.06.43c.43.18.83.41 1.23.71l.91.7 1.06-.43 1.27-.51.7 1.21-1.07.85-.89.7.14 1.13zM12 8c-2.21 0-4 1.79-4 4s1.79 4 4 4 4-1.79 4-4-1.79-4-4-4zm0 6c-1.1 0-2-.9-2-2s.9-2 2-2 2 .9 2 2-.9 2-2 2z"/></svg>
</div>
</div></div></div>
</body></html>
